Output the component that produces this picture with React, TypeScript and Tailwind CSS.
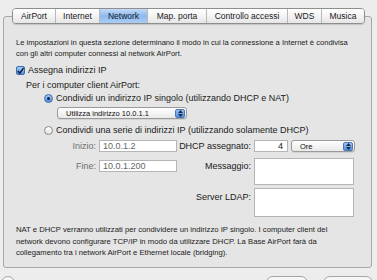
import React from "react";

const tabs = ["AirPort", "Internet", "Network", "Map. porta", "Controllo accessi", "WDS", "Musica"];
const tabWidths = [42, 44, 48, 59, 81, 34, 43];

function Stepper() {
    return (
        <span className="flex h-[9px] w-[10px] flex-col items-center justify-center gap-[1px] rounded-[2px] border border-[#4a78b8] bg-gradient-to-b from-[#9cc3f2] to-[#4f8fe0]">
            <svg width="5" height="3" viewBox="0 0 5 3"><path d="M0 3 L2.5 0 L5 3 Z" fill="#1d2c44" /></svg>
            <svg width="5" height="3" viewBox="0 0 5 3"><path d="M0 0 L2.5 3 L5 0 Z" fill="#1d2c44" /></svg>
        </span>
    );
}

function Popup({ label, width }: { label: string; width: string }) {
    return (
        <div className={`flex h-[12px] items-center justify-between rounded-[3px] border border-[#9a9a9a] bg-gradient-to-b from-white to-[#e9e9e9] pl-[8px] pr-[1px] shadow-[0_1px_0_rgba(0,0,0,0.08)] ${width}`}>
            <span className="text-[7.5px] text-[#111]">{label}</span>
            <Stepper />
        </div>
    );
}

function Radio({ on }: { on?: boolean }) {
    return on ? (
        <span className="flex h-[9px] w-[9px] items-center justify-center rounded-full border border-[#3a6db0] bg-gradient-to-b from-[#a6c9f3] to-[#4f8fe0]">
            <span className="h-[3px] w-[3px] rounded-full bg-[#10203a]" />
        </span>
    ) : (
        <span className="h-[9px] w-[9px] rounded-full border border-[#8a8a8a] bg-gradient-to-b from-white to-[#e4e4e4]" />
    );
}

export default function App() {
    return (
        <div className="h-[280px] w-[377px] overflow-hidden bg-[#ededed] text-[#1a1a1a] [font-family:'Liberation_Sans',Arial,sans-serif]">
            {/* tabs */}
            <div className="relative z-10 flex pl-[12px] pt-[8px]">
                <div className="flex h-[16px] overflow-hidden rounded-[4px] border border-[#8e8e8e] shadow-[0_1px_1px_rgba(0,0,0,0.15)]">
                    {tabs.map((t, i) => (
                        <div
                            key={t}
                            style={{ width: tabWidths[i] }}
                            className={
                                "flex items-center justify-center text-[8.5px] " +
                                (i > 0 ? "border-l border-[#b8b8b8] " : "") +
                                (t === "Network"
                                    ? "bg-gradient-to-b from-[#c3dbf7] via-[#8fb9ec] to-[#a9cdf5] text-[#0c1a2e]"
                                    : "bg-gradient-to-b from-white via-[#f4f4f4] to-[#e6e6e6]")
                            }
                        >
                            {t}
                        </div>
                    ))}
                </div>
            </div>

            {/* panel */}
            <div className="-mt-[8px] ml-[3px] h-[252px] w-[369px] rounded-[3px] border border-[#a8a8a8] bg-[#e5e5e5] px-[12px] pt-[20px] text-[9px] leading-[11px]">
                <p className="text-[7.6px] leading-[11px]">
                    Le impostazioni in questa sezione determinano il modo in cui la connessione a Internet è condivisa
                    <br />
                    con gli altri computer connessi al network AirPort.
                </p>

                <div className="mt-[6px] flex items-center gap-[3px]">
                    <span className="flex h-[9px] w-[9px] items-center justify-center rounded-[2px] border border-[#3a6db0] bg-gradient-to-b from-[#a6c9f3] to-[#4f8fe0]">
                        <svg width="8" height="8" viewBox="0 0 8 8"><path d="M1 4 L3.2 6.5 L7.5 0.5" fill="none" stroke="#0c1a30" strokeWidth="1.6" /></svg>
                    </span>
                    <span>Assegna indirizzi IP</span>
                </div>

                <div className="mt-[4px] pl-[10px]">Per i computer client AirPort:</div>

                <div className="mt-[2px] flex items-center gap-[3px] pl-[28px]">
                    <Radio on />
                    <span>Condividi un indirizzo IP singolo (utilizzando DHCP e NAT)</span>
                </div>
                <div className="mt-[3px] pl-[41px]">
                    <Popup label="Utilizza indirizzo 10.0.1.1" width="w-[130px]" />
                </div>
                <div className="mt-[6px] flex items-center gap-[3px] pl-[28px]">
                    <Radio />
                    <span>Condividi una serie di indirizzi IP (utilizzando solamente DHCP)</span>
                </div>

                <div className="mt-[4px] flex">
                    <div className="flex w-[161px] flex-col gap-[8px]">
                        <div className="flex items-center justify-end gap-[3px]">
                            <span className="text-[#6f6f6f]">Inizio:</span>
                            <span className="flex h-[12px] w-[78px] items-center border border-[#b5b5b5] bg-white pl-[3px] text-[#666]">10.0.1.2</span>
                        </div>
                        <div className="flex items-center justify-end gap-[3px]">
                            <span className="text-[#6f6f6f]">Fine:</span>
                            <span className="flex h-[12px] w-[78px] items-center border border-[#b5b5b5] bg-white pl-[3px] text-[#666]">10.0.1.200</span>
                        </div>
                    </div>
                    <div className="ml-[2px] flex flex-col">
                        <div className="flex items-center gap-[3px]">
                            <span className="w-[72px] text-right">DHCP assegnato:</span>
                            <span className="flex h-[12px] w-[34px] items-center justify-end border border-[#b5b5b5] bg-white pr-[4px]">4</span>
                            <Popup label="Ore" width="w-[64px]" />
                        </div>
                        <div className="mt-[6px] flex gap-[3px]">
                            <span className="w-[72px] pt-[3px] text-right">Messaggio:</span>
                            <span className="h-[27px] w-[100px] border border-[#b5b5b5] bg-white" />
                        </div>
                        <div className="mt-[3px] flex gap-[3px]">
                            <span className="w-[72px] pt-[4px] text-right">Server LDAP:</span>
                            <span className="h-[29px] w-[100px] border border-[#b5b5b5] bg-white" />
                        </div>
                    </div>
                </div>

                <p className="mt-[7px] text-[7.7px] leading-[11.5px]">
                    NAT e DHCP verranno utilizzati per condividere un indirizzo IP singolo. I computer client del
                    <br />
                    network devono configurare TCP/IP in modo da utilizzare DHCP. La Base AirPort farà da
                    <br />
                    collegamento tra i network AirPort e Ethernet locale (bridging).
                </p>
            </div>

            {/* bottom buttons, cut off */}
            <div className="mt-[8px] flex items-start pl-[1px] pr-[4px]">
                <span className="h-[14px] w-[14px] rounded-full border border-[#a5a5a5] bg-[#f7f7f7]" />
                <span className="ml-auto h-[14px] w-[42px] rounded-[7px] border border-[#a5a5a5] bg-[#f7f7f7]" />
                <span className="ml-[15px] h-[14px] w-[50px] rounded-[7px] border border-[#a5a5a5] bg-[#f7f7f7]" />
            </div>
        </div>
    );
}
